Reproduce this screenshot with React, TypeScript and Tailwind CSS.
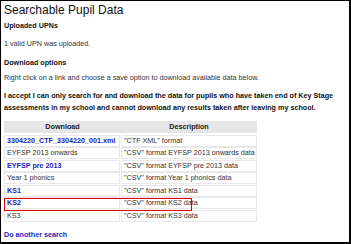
const rows = [
  { label: '3304220_CTF_3304220_001.xml', link: true, desc: '"CTF XML" format' },
  { label: 'EYFSP 2013 onwards', link: false, desc: '"CSV" format EYFSP 2013 onwards data' },
  { label: 'EYFSP pre 2013', link: true, desc: '"CSV" format EYFSP pre 2013 data' },
  { label: 'Year 1 phonics', link: false, desc: '"CSV" format Year 1 phonics data' },
  { label: 'KS1', link: true, desc: '"CSV" format KS1 data' },
  { label: 'KS2', link: true, desc: '"CSV" format KS2 data' },
  { label: 'KS3', link: false, desc: '"CSV" format KS3 data' },
];

export default function App() {
  return (
    <div
      className="relative w-[351px] h-[244px] overflow-hidden bg-white border-t border-l border-r-2 border-b-2 border-black px-[3px] text-[#333] text-[7.2px]"
      style={{ fontFamily: '"Liberation Sans", Arial, sans-serif' }}
    >
      <h1 className="pt-[2px] text-[12px] leading-[14px] text-[#111]">Searchable Pupil Data</h1>

      <div className="mt-[3.5px] font-bold leading-[9px] text-[#111]">Uploaded UPNs</div>
      <div className="mt-[9px] leading-[9px]">1 valid UPN was uploaded.</div>

      <div className="mt-[10px] font-bold leading-[9px] text-[#111]">Download options</div>
      <div className="mt-[6.5px] leading-[9px]">Right click on a link and choose a save option to download available data below.</div>

      <p className="mt-[7.5px] font-bold leading-[12px] text-[#111]">
        I accept I can only search for and download the data for pupils who have taken end of Key Stage assessments in my school and cannot download any results taken after leaving my school.
      </p>

      <div className="mt-[7px] w-[253px]">
        <div className="flex h-[12px] bg-[#e6e6e6] font-bold text-[#222] leading-[12px]">
          <div className="w-[117px] text-center">Download</div>
          <div className="flex-1 text-center">Description</div>
        </div>
        <div className="mt-[2px] flex flex-col gap-[0.5px]">
          {rows.map((r) => (
            <div key={r.label} className="flex h-[12px] leading-[10px]">
              <div
                className={
                  'w-[116px] border border-[#e8e8e8] pl-[2px] ' +
                  (r.link ? 'font-bold text-[#2424b8]' : '')
                }
              >
                {r.label}
              </div>
              <div className="ml-[1px] flex-1 border border-[#e8e8e8] pl-[2px]">{r.desc}</div>
            </div>
          ))}
        </div>
      </div>

      <div className="mt-[8px] font-bold leading-[9px] text-[#2424b8]">Do another search</div>

      <div className="absolute left-[3px] top-[197px] w-[188px] h-[13px] border border-[#e00000]" />
    </div>
  );
}
